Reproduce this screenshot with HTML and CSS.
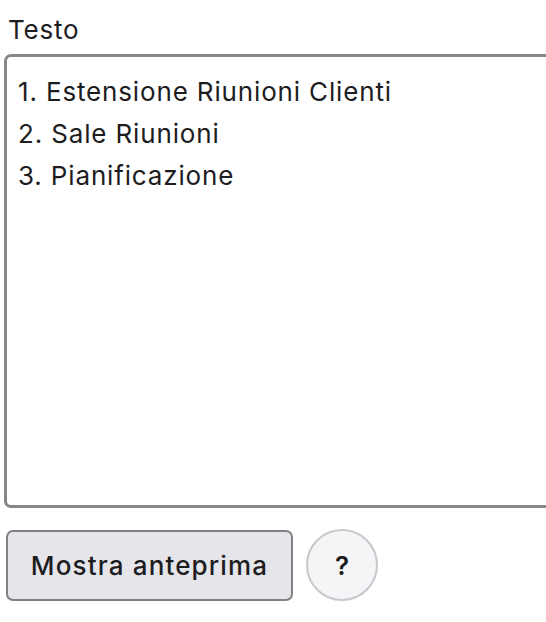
FILE: index.html
```html
<!DOCTYPE html>
<html lang="it">
<head>
  <meta charset="UTF-8">
  <meta name="viewport" content="width=device-width, initial-scale=1.0">
  <title>Testo</title>
  <link rel="stylesheet" href="styles.css">
</head>
<body>
  <div class="field">
    <label for="testo" class="label">Testo</label>
    <textarea id="testo" class="text-box">1. Estensione Riunioni Clienti
2. Sale Riunioni
3. Pianificazione</textarea>
  </div>

  <div class="actions">
    <button class="btn-preview">Mostra anteprima</button>
    <button class="btn-help">?</button>
  </div>
</body>
</html>
```

FILE: styles.css
```css
*{margin:0;padding:0;box-sizing:border-box;}
html{overflow:hidden;}
body{padding:13px 0 0 4px;background:#fff;font-family:Inter, "Noto Sans", sans-serif;font-size:26px;letter-spacing:0.8px;color:#1d1d1f;}
.field{display:flex;flex-direction:column;}
.label{padding-left:4px;line-height:34px;margin-bottom:7px;}
.text-box{display:block;width:580px;height:454px;padding:14px 11px;border:3px solid #86868b;border-radius:7px;font-family:inherit;font-size:26px;letter-spacing:0.85px;line-height:42px;color:#1d1d1f;resize:none;outline:none;}
.actions{display:flex;align-items:center;gap:13px;margin-top:21px;padding-left:2px;}
.btn-preview{width:287px;height:71px;padding:0;border:2px solid #808085;border-radius:7px;background:#e5e5ea;font-family:inherit;font-size:26px;letter-spacing:1.15px;font-weight:500;color:#1d1d1f;cursor:pointer;}
.btn-help{width:72px;height:72px;border:2px solid #c7c7cc;border-radius:50%;background:#f5f5f7;font-family:inherit;font-size:26px;font-weight:600;color:#1d1d1f;cursor:pointer;}
```
